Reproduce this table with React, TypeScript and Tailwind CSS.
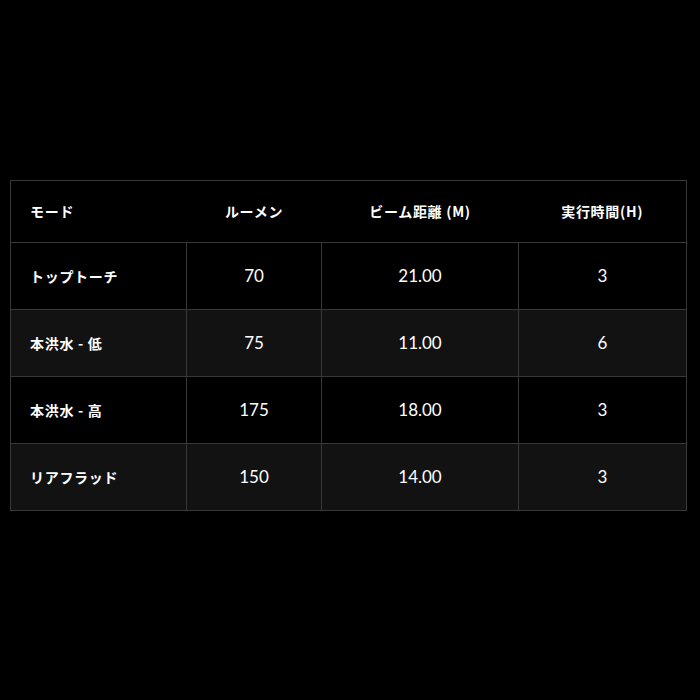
const rows = [
  { mode: 'トップトーチ', lumen: '70', beam: '21.00', hours: '3' },
  { mode: '本洪水 - 低', lumen: '75', beam: '11.00', hours: '6' },
  { mode: '本洪水 - 高', lumen: '175', beam: '18.00', hours: '3' },
  { mode: 'リアフラッド', lumen: '150', beam: '14.00', hours: '3' },
];

const jp = "font-['Noto_Sans_CJK_JP','Noto_Sans',sans-serif] tracking-[0.05em]";
const num = "font-['Lato','Noto_Sans_CJK_JP',sans-serif]";

export default function App() {
  return (
    <div className="h-[700px] w-[700px] bg-black pl-[10px] pt-[180px]">
      <table className="w-[676px] table-fixed border-collapse border border-[#383838] text-white">
        <colgroup>
          <col className="w-[176px]" />
          <col className="w-[135px]" />
          <col className="w-[197px]" />
          <col className="w-[168px]" />
        </colgroup>
        <thead>
          <tr className={`h-[62px] bg-black text-[14px] font-bold ${jp}`}>
            <th className="pl-[19px] text-left font-bold">モード</th>
            <th className="text-center font-bold">ルーメン</th>
            <th className="text-center font-bold">ビーム距離 (M)</th>
            <th className="text-center font-bold">実行時間(H)</th>
          </tr>
        </thead>
        <tbody>
          {rows.map((r, i) => (
            <tr key={r.mode} className={`h-[67px] border-t border-[#383838] ${i % 2 === 1 ? 'bg-[#121212]' : 'bg-black'}`}>
              <td className={`pl-[19px] text-[14px] font-bold ${jp}`}>{r.mode}</td>
              <td className={`border-l border-[#383838] text-center text-[17px] font-normal ${num}`}>{r.lumen}</td>
              <td className={`border-l border-[#383838] text-center text-[17px] font-normal ${num}`}>{r.beam}</td>
              <td className={`border-l border-[#383838] text-center text-[17px] font-normal ${num}`}>{r.hours}</td>
            </tr>
          ))}
        </tbody>
      </table>
    </div>
  );
}
